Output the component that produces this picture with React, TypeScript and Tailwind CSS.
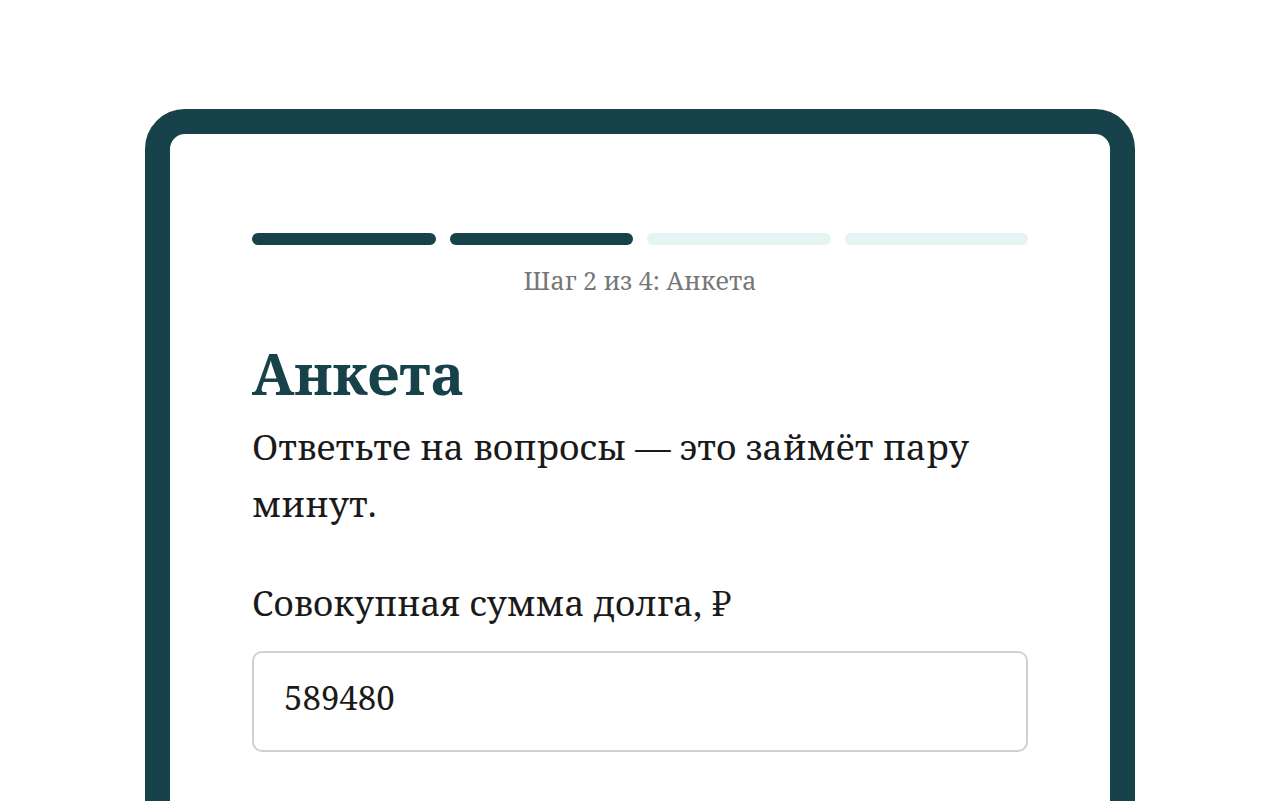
const steps = [true, true, false, false];

export default function App() {
  return (
    <div className="min-h-screen bg-white pt-[109px] font-['Noto_Serif',serif]">
      <div className="mx-auto w-[990px] rounded-[40px] border-[25px] border-[#17424a] bg-white px-[82px] pt-[99px] pb-[200px]">
        {/* Progress */}
        <div className="flex gap-3.5">
          {steps.map((done, i) => (
            <div
              key={i}
              className={`h-3 flex-1 rounded-full ${done ? 'bg-[#17424a]' : 'bg-[#e4f4f3]'}`}
            />
          ))}
        </div>
        <p className="mt-[17px] text-center text-[25px] leading-[36px] text-[#777777]">Шаг 2 из 4: Анкета</p>

        <h1 className="mt-[42px] text-[56.5px] font-bold leading-[67px] text-[#17424a]">Анкета</h1>
        <p className="mt-[11px] text-[35.4px] leading-[57px] text-[#1a1a1a]">
          Ответьте на вопросы — это займёт пару минут.
        </p>

        <label className="mt-[42px] block">
          <span className="block text-[35px] leading-[57px] text-[#1a1a1a]">Совокупная сумма долга, ₽</span>
          <input
            type="text"
            defaultValue="589480"
            className="mt-[20px] block h-[101px] w-full rounded-[10px] border-2 border-[#d0d0d0] bg-white pt-0 pb-[8px] pl-[30px] text-[33px] text-[#1a1a1a] outline-none"
          />
        </label>
      </div>
    </div>
  );
}
